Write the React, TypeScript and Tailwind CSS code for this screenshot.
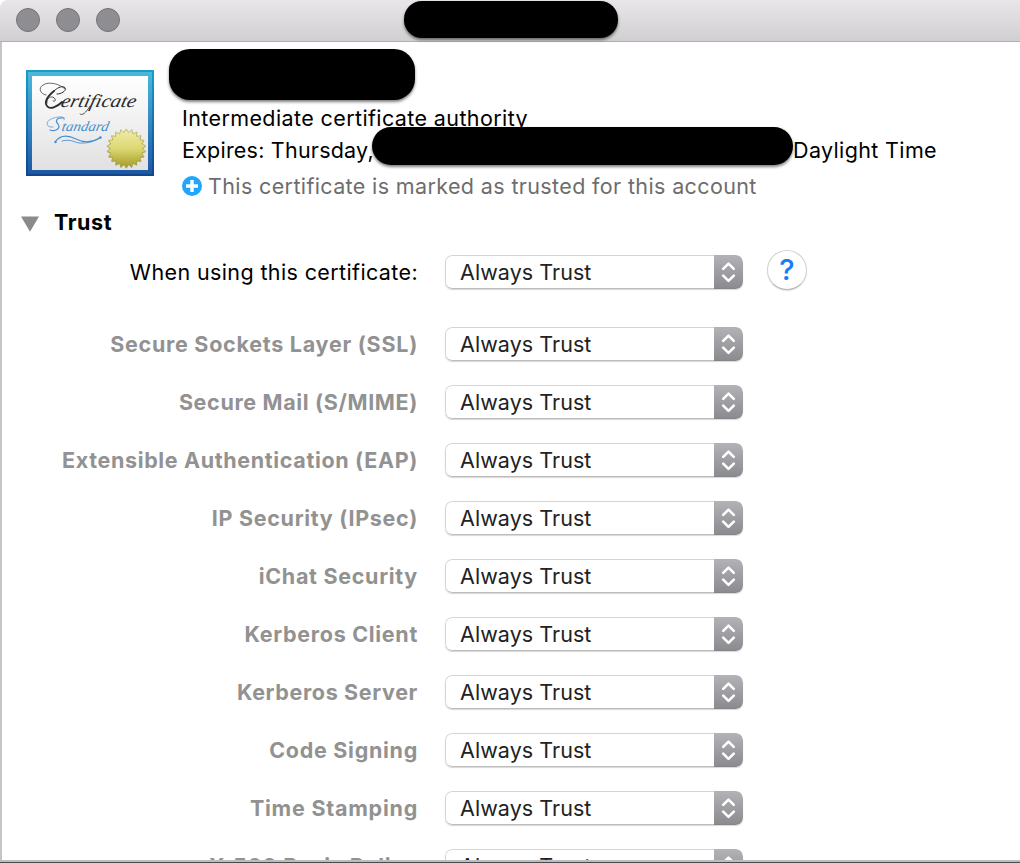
import React from "react";

const policies: { label: string; cls: string }[] = [
  { label: "Secure Sockets Layer (SSL)", cls: "tracking-[0.74px]" },
  { label: "Secure Mail (S/MIME)", cls: "tracking-[0.65px]" },
  { label: "Extensible Authentication (EAP)", cls: "tracking-[0.65px]" },
  { label: "IP Security (IPsec)", cls: "tracking-[0.7px]" },
  { label: "iChat Security", cls: "tracking-[0.7px]" },
  { label: "Kerberos Client", cls: "tracking-[0.7px]" },
  { label: "Kerberos Server", cls: "tracking-[0.64px]" },
  { label: "Code Signing", cls: "tracking-[0.72px]" },
  { label: "Time Stamping", cls: "tracking-[0.76px]" },
  { label: "X.509 Basic Policy", cls: "tracking-[0.72px]" },
];

function TrustSelect() {
  return (
    <button className="flex h-[34px] w-[298px] shrink-0 overflow-hidden rounded-[7px] bg-white text-left shadow-[0_1px_1px_rgba(0,0,0,0.16)]">
      <span className="flex h-full flex-1 items-center rounded-l-[7px] border border-r-0 border-[#d4d4d4] border-b-[#bcbcbc] pl-[14px] text-[#222] tracking-[0.06px]">
        Always Trust
      </span>
      <span className="flex h-full w-[29px] items-center justify-center rounded-r-[7px] border-b border-[#858489] bg-linear-to-b from-[#b3b2b7] to-[#8c8b90]">
        <svg width="15" height="22" viewBox="0 0 15 22" fill="none" stroke="#fff" strokeWidth="2.6" strokeLinecap="round" strokeLinejoin="round">
          <path d="M2.2 7.9 7.5 2.6 12.8 7.9M2.2 14.6 7.5 19.9 12.8 14.6" />
        </svg>
      </span>
    </button>
  );
}

function CertificateIcon() {
  const star = Array.from({ length: 44 }, (_, i) => {
    const r = i % 2 ? 16 : 19.6;
    const a = (i * Math.PI) / 22 - Math.PI / 2;
    return `${(100.3 + r * Math.cos(a)).toFixed(2)},${(78.5 + r * Math.sin(a)).toFixed(2)}`;
  }).join(" ");
  return (
    <svg className="shrink-0" width="128" height="106" viewBox="0 0 128 106">
      <defs>
        <linearGradient id="frame" x2="0" y2="1">
          <stop stopColor="#49b9dc" />
          <stop offset="1" stopColor="#1c57a8" />
        </linearGradient>
        <linearGradient id="edge" x2="0" y2="1">
          <stop stopColor="#1c9cc6" />
          <stop offset="1" stopColor="#12468a" />
        </linearGradient>
        <linearGradient id="paper" x2="0" y2="1">
          <stop stopColor="#fff" />
          <stop offset="1" stopColor="#e1e1e1" />
        </linearGradient>
        <linearGradient id="seal" x2="0" y2="1">
          <stop stopColor="#f0edaa" />
          <stop offset="0.5" stopColor="#dcd873" />
          <stop offset="1" stopColor="#a49a22" />
        </linearGradient>
      </defs>
      <rect width="128" height="106" fill="url(#edge)" />
      <rect x="2" y="2" width="124" height="102" fill="url(#frame)" />
      <rect x="6" y="6" width="116" height="94" fill="url(#paper)" />
      <g fill="none" stroke="#2b2b2b" strokeLinecap="round">
        <path strokeWidth="0.7" d="M20 25C14 24 12 18 17 15C23 11 34 14 39 19" />
        <path strokeWidth="1" d="M31 24C37 24 42 19 38 17C35 16 31 18 28 21" />
        <path strokeWidth="1.8" d="M28 21C22 26 18 32 21 36C24 40 31 37 36 32" />
        <path strokeWidth="0.8" d="M21 33C20 27 27 25 29 29C30 31 28 32 27 31" />
        <path strokeWidth="0.8" d="M64 36C60 43 56 46 54 44" />
      </g>
      <text transform="translate(34 37) skewX(-14)" fontFamily="Liberation Serif, serif" fontStyle="italic" fontSize="18.5" fill="#2b2b2b" textLength="75" lengthAdjust="spacingAndGlyphs">ertificate</text>
      <g fill="none" stroke="#4b8fcf" strokeLinecap="round">
        <path strokeWidth="0.7" d="M27 57C20 58 19 52 25 49C32 46 40 46 38 50" />
        <path strokeWidth="1.2" d="M38 48C30 47 29 51 32 54C35 58 30 62 24 60" />
        <path strokeWidth="1.1" d="M29 72C34 65 42 65 50 69S65 73 74 68" />
        <path strokeWidth="0.9" d="M36 71C46 68 49 74 57 73C65 73 71 70 74 67" />
      </g>
      <circle cx="29.5" cy="72" r="1.2" fill="#4b8fcf" />
      <circle cx="74.5" cy="67.5" r="1.2" fill="#4b8fcf" />
      <text transform="translate(35 61) skewX(-12)" fontFamily="Liberation Serif, serif" fontStyle="italic" fontSize="14" fill="#4b8fcf" textLength="47" lengthAdjust="spacingAndGlyphs">tandard</text>
      <polygon points={star} fill="#817d39" opacity="0.45" transform="translate(0 1)" />
      <polygon points={star} fill="url(#seal)" stroke="#a39b3c" strokeWidth="0.6" />
    </svg>
  );
}

export default function App() {
  return (
    <div className="flex h-[863px] w-[1020px] flex-col overflow-hidden whitespace-nowrap bg-white font-['Inter','Liberation_Sans',sans-serif] text-[21.5px] leading-[32px] text-black">
      <header className="relative flex h-[42px] shrink-0 items-center gap-4 rounded-tl-[8px] border-b border-[#b1afb1] bg-linear-to-b from-[#e8e6e8] to-[#d1cfd1] pl-4 pb-[2px]">
        <i className="size-6 rounded-full border border-[#737275] bg-[#8e8d91]" />
        <i className="size-6 rounded-full border border-[#737275] bg-[#8e8d91]" />
        <i className="size-6 rounded-full border border-[#737275] bg-[#8e8d91]" />
        <div className="absolute left-[404px] top-[1px] h-[37px] w-[214px] rounded-[18px] bg-black shadow-[0_2px_3px_rgba(0,0,0,0.5)]" />
      </header>

      <main className="h-[818px] shrink-0 overflow-hidden border-l-2 border-[#c5c4c6]">
        <section className="flex pl-6 pt-[7px]">
          <div className="pt-[21px]">
            <CertificateIcon />
          </div>
          <div className="flex flex-col pl-7">
            <div className="-ml-[13px] h-[51px] w-[246px] rounded-[21px] bg-black shadow-[0_2px_3px_rgba(0,0,0,0.5)]" />
            <p className="mt-[2px] tracking-[0.39px]">Intermediate certificate authority</p>
            <div className="relative flex">
              <p className="w-[611px] tracking-[0.22px]">Expires: Thursday,</p>
              <p className="tracking-[0.36px]">Daylight Time</p>
              <div className="absolute left-[190px] top-[-7px] h-[38px] w-[421px] rounded-[19px] bg-black shadow-[0_2px_3px_rgba(0,0,0,0.5)]" />
            </div>
            <div className="mt-1 flex items-center text-[#6d6d6d]">
              <svg className="mr-[6px]" width="20" height="20" viewBox="0 0 20 20">
                <circle cx="10" cy="10" r="10" fill="#1ea7fd" />
                <path d="M10 4v12M4 10h12" stroke="#fff" strokeWidth="3.4" />
              </svg>
              <p className="tracking-[0.37px]">This certificate is marked as trusted for this account</p>
            </div>
          </div>
        </section>

        <h2 className="mt-1 flex items-center pl-[19px] font-bold">
          <svg className="mr-[15px] mt-[3px]" width="18" height="16" viewBox="0 0 18 16">
            <path d="M0 .5h18L9 15.8z" fill="#8b8b8b" />
          </svg>
          <span className="tracking-[0.6px]">Trust</span>
        </h2>

        <section className="mt-[17px] flex h-[34px] items-center">
          <p className="w-[416px] text-right tracking-[0.38px]">When using this certificate:</p>
          <div className="ml-[27px]">
            <TrustSelect />
          </div>
          <button className="-mt-[5px] ml-[24px] flex size-[40px] items-center justify-center rounded-full border border-[#d2d2d2] border-b-[#b8b8b8] bg-white text-[29px] font-medium text-[#147efb] shadow-[0_1px_1px_rgba(0,0,0,0.12)]">
            ?
          </button>
        </section>

        <section className="mt-[38px] flex flex-col gap-6">
          {policies.map((p) => (
            <div key={p.label} className="flex h-[34px] items-center">
              <p className="w-[416px] text-right font-bold text-[#929292]">
                <span className={p.cls}>{p.label}</span>
              </p>
              <div className="ml-[27px]">
                <TrustSelect />
              </div>
            </div>
          ))}
        </section>
      </main>
      <div className="h-[2px] shrink-0 bg-[#bdbcbe]" />
      <div className="h-px shrink-0 bg-[#4b4a4d]" />
    </div>
  );
}
